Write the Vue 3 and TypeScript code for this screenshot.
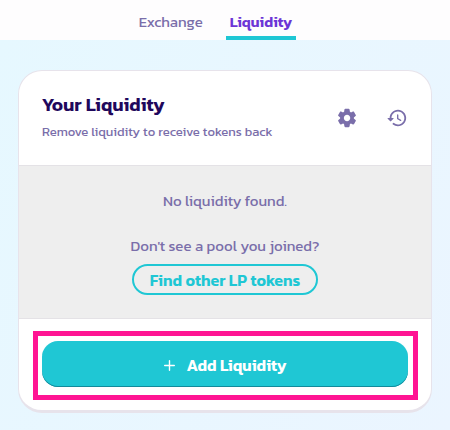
<script setup lang="ts">
import { ref } from 'vue'

type Tab = 'Exchange' | 'Liquidity'

const tabs: Tab[] = ['Exchange', 'Liquidity']
const active = ref<Tab>('Liquidity')
</script>

<template>
  <div class="page">
    <nav class="tabs">
      <a
        v-for="tab in tabs"
        :key="tab"
        href="#"
        class="tab"
        :class="{ active: tab === active }"
        @click.prevent="active = tab"
      >{{ tab }}</a>
    </nav>

    <main class="content">
      <section class="card">
        <header class="card-header">
          <div class="heading">
            <h1>Your Liquidity</h1>
            <p>Remove liquidity to receive tokens back</p>
          </div>
          <div class="actions">
            <button type="button" class="icon-button" aria-label="Settings">
              <svg viewBox="0 0 24 24" aria-hidden="true">
                <path d="M19.5 12c0-.23-.01-.45-.03-.68l1.86-1.41c.4-.3.51-.86.26-1.3l-1.87-3.23c-.25-.44-.79-.62-1.25-.42l-2.15.91c-.37-.26-.76-.49-1.17-.68l-.29-2.31C14.8 2.38 14.37 2 13.87 2h-3.73c-.51 0-.94.38-1 .88l-.29 2.31c-.41.19-.8.42-1.17.68l-2.15-.91c-.46-.2-1-.02-1.25.42L2.41 8.62c-.25.44-.14.99.26 1.3l1.86 1.41C4.51 11.55 4.5 11.77 4.5 12s.01.45.03.68l-1.86 1.41c-.4.3-.51.86-.26 1.3l1.87 3.23c.25.44.79.62 1.25.42l2.15-.91c.37.26.76.49 1.17.68l.29 2.31c.06.5.49.88.99.88h3.73c.5 0 .93-.38.99-.88l.29-2.31c.41-.19.8-.42 1.17-.68l2.15.91c.46.2 1 .02 1.25-.42l1.87-3.23c.25-.44.14-.99-.26-1.3l-1.86-1.41c.03-.23.04-.45.04-.68zm-7.46 3.5c-1.93 0-3.5-1.57-3.5-3.5s1.57-3.5 3.5-3.5 3.5 1.57 3.5 3.5-1.57 3.5-3.5 3.5z" />
              </svg>
            </button>
            <button type="button" class="icon-button" aria-label="Recent transactions">
              <svg viewBox="0 0 24 24" aria-hidden="true">
                <path d="M13.26 3C8.17 2.86 4 6.95 4 12H2.21c-.45 0-.67.54-.35.85l2.79 2.8c.2.2.51.2.71 0l2.79-2.8c.31-.31.09-.85-.36-.85H6c0-3.9 3.18-7.05 7.1-7 3.72.05 6.85 3.18 6.9 6.9.05 3.91-3.1 7.1-7 7.1-1.61 0-3.1-.55-4.28-1.48a.994.994 0 0 0-1.32.08c-.42.42-.39 1.13.08 1.49A8.858 8.858 0 0 0 13 21c5.05 0 9.14-4.17 9-9.26-.13-4.69-4.05-8.61-8.74-8.74zm-.51 5c-.41 0-.75.34-.75.75v3.68c0 .35.19.68.49.86l3.12 1.85c.36.21.82.09 1.03-.26.21-.36.09-.82-.26-1.03l-2.88-1.71v-3.4c-.01-.4-.34-.74-.75-.74z" />
              </svg>
            </button>
          </div>
        </header>

        <div class="card-body">
          <p>No liquidity found.</p>
          <p class="hint">Don't see a pool you joined?</p>
          <button type="button" class="find">Find other LP tokens</button>
        </div>

        <footer class="card-footer">
          <div class="highlight">
            <button type="button" class="add">
              <svg viewBox="0 0 11 11" aria-hidden="true">
                <path d="M5.5 .7v9.6M.7 5.5h9.6" />
              </svg>
              Add Liquidity
            </button>
          </div>
        </footer>
      </section>
    </main>
  </div>
</template>

<style>
body {
  margin: 0;
}
</style>

<style scoped>
.page {
  display: flex;
  flex-direction: column;
  min-height: 100vh;
  color: #7a6eaa;
  font-family: Kanit, "Noto Sans", "Open Sans", sans-serif;
  font-size: 15px;
  line-height: 22px;
}

.tabs {
  display: flex;
  justify-content: center;
  gap: 19px;
  box-sizing: border-box;
  height: 40px;
  padding-right: 19px;
  background: #fefdfe;
}

.tab {
  box-sizing: border-box;
  padding: 11px 4px 0;
  color: #7a6eaa;
  text-decoration: none;
}

.tab.active {
  border-bottom: 4px solid #1fc7d4;
  border-radius: 2px 2px 0 0;
  color: #6c35d6;
  font-weight: 600;
}

.content {
  flex: 1;
  padding: 30px 18px 18px;
  background: linear-gradient(120deg, #e6f8ff, #ebf5ff);
}

.card {
  overflow: hidden;
  border: 1px solid #e7e3eb;
  border-bottom-width: 3px;
  border-radius: 24px;
  background: #fff;
}

.card-header {
  display: flex;
  align-items: center;
  justify-content: space-between;
  padding: 22px 12px 22px 23px;
  border-bottom: 1px solid #e4e2e6;
}

h1,
p {
  margin: 0;
}

h1 {
  color: #1f085c;
  font-size: 19px;
  font-weight: 600;
  line-height: 24px;
}

.heading p {
  margin-top: 4px;
  font-size: 13px;
}

.actions {
  display: flex;
  flex: none;
  gap: 6px;
}

.icon-button {
  display: grid;
  place-items: center;
  width: 44px;
  height: 44px;
  padding: 0;
  border: 0;
  background: none;
  cursor: pointer;
}

.icon-button svg {
  width: 22px;
  fill: #7a6eaa;
}

.card-body {
  display: flex;
  flex-direction: column;
  align-items: center;
  padding: 24px 24px 23px;
  border-bottom: 1px solid #e4e2e6;
  background: #eee;
}

.hint {
  margin-top: 23px;
}

.find {
  height: 31px;
  margin-top: 7px;
  padding: 0 16px;
  border: 2px solid #1fc7d4;
  border-radius: 16px;
  background: none;
  color: #1fc7d4;
  font: inherit;
  font-size: 16px;
  font-weight: 600;
  line-height: 24px;
  cursor: pointer;
}

.card-footer {
  padding: 12px 13px 10px 14px;
}

.highlight {
  padding: 5px 5px 8px 4px;
  border: 5px solid #ff1493;
}

.add {
  display: flex;
  align-items: center;
  justify-content: center;
  gap: 12px;
  width: 100%;
  height: 46px;
  padding: 2px 0 0;
  border: 0;
  border-radius: 16px;
  background: #1fc7d4;
  box-shadow: inset 0 -1px 0 #138a9b;
  color: #fff;
  font: inherit;
  font-size: 16px;
  font-weight: 600;
  cursor: pointer;
}

.add svg {
  width: 11px;
  fill: none;
  stroke: #fff;
  stroke-width: 1.4;
  stroke-linecap: round;
}
</style>
